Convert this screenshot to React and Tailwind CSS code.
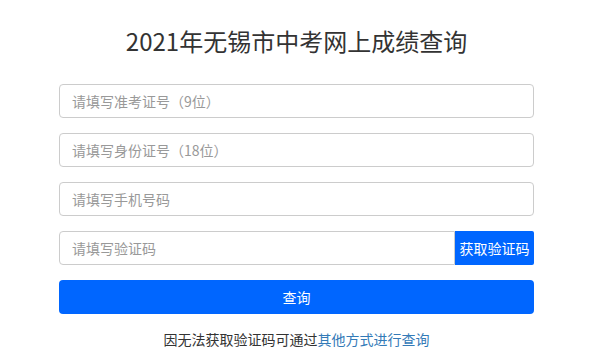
export default function App() {
  const font = { fontFamily: '"Noto Sans CJK SC", "Noto Sans", sans-serif' };
  return (
    <div className="w-[614px] h-[361px] bg-white" style={font}>
      <div className="ml-[59px] w-[475px] flex flex-col">
        <h1 className="pt-[24px] h-[84px] text-center text-[24px] leading-[34px] text-[#333] font-normal">
          2021年无锡市中考网上成绩查询
        </h1>
        <div className="flex flex-col gap-[15px]">
          <input
            className="h-[34px] border border-[#ccc] rounded-[4px] px-3 text-[14px] text-[#555] placeholder:text-[#999] outline-none"
            placeholder="请填写准考证号（9位）"
          />
          <input
            className="h-[34px] border border-[#ccc] rounded-[4px] px-3 text-[14px] text-[#555] placeholder:text-[#999] outline-none"
            placeholder="请填写身份证号（18位）"
          />
          <input
            className="h-[34px] border border-[#ccc] rounded-[4px] px-3 text-[14px] text-[#555] placeholder:text-[#999] outline-none"
            placeholder="请填写手机号码"
          />
          <div className="flex h-[34px]">
            <input
              className="flex-1 min-w-0 h-full border border-[#ccc] rounded-l-[4px] px-3 text-[14px] text-[#555] placeholder:text-[#999] outline-none"
              placeholder="请填写验证码"
            />
            <button className="w-[79px] h-full bg-[#0066ff] text-white text-[14px] rounded-r-[2px] flex items-center justify-center">
              获取验证码
            </button>
          </div>
          <button className="h-[34px] bg-[#0066ff] text-white text-[14px] rounded-[4px] flex items-center justify-center">
            查询
          </button>
        </div>
        <p className="mt-[15px] text-center text-[14px] leading-[20px] text-[#333]">
          因无法获取验证码可通过<span className="text-[#337ab7]">其他方式进行查询</span>
        </p>
      </div>
    </div>
  );
}
